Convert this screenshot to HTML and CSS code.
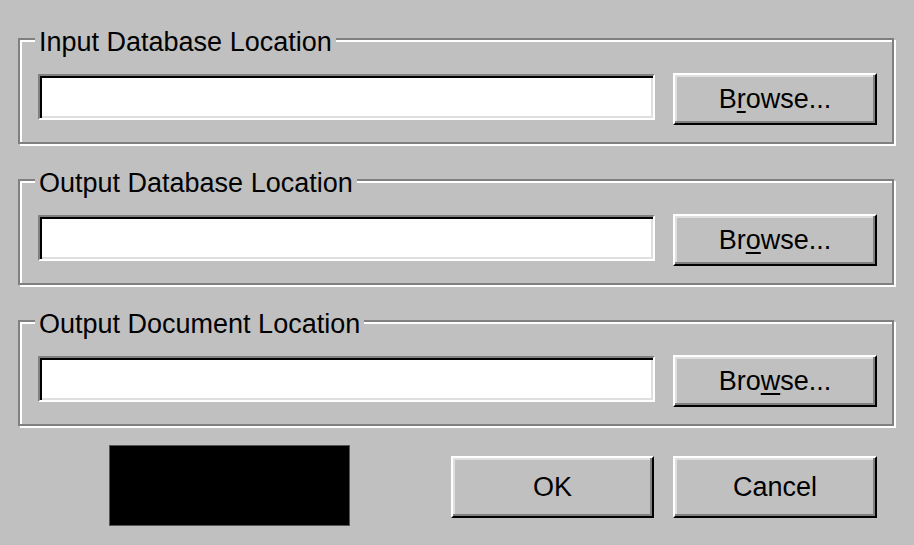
FILE: index.html
```html
<!DOCTYPE html>
<html>
<head>
<meta charset="utf-8">
<link rel="stylesheet" href="styles.css">
</head>
<body>
<div class="dialog">
  <div class="group">
    <div class="group-title">Input Database Location</div>
    <div class="row">
      <input class="field" type="text">
      <button class="btn browse">B<u>r</u>owse...</button>
    </div>
  </div>
  <div class="group">
    <div class="group-title">Output Database Location</div>
    <div class="row">
      <input class="field" type="text">
      <button class="btn browse">Br<u>o</u>wse...</button>
    </div>
  </div>
  <div class="group">
    <div class="group-title">Output Document Location</div>
    <div class="row">
      <input class="field" type="text">
      <button class="btn browse">Bro<u>w</u>se...</button>
    </div>
  </div>
  <div class="actions">
    <div class="preview"></div>
    <button class="btn action ok">OK</button>
    <button class="btn action">Cancel</button>
  </div>
</div>
</body>
</html>
```
FILE: styles.css
```css
html, body {
  margin: 0;
  background: #c0c0c0;
}
body {
  font-family: "Liberation Sans", Arial, sans-serif;
  color: #000;
}
.dialog {
  padding: 38px 0 0 18px;
  width: 876px;
}
.group {
  border: 2px solid #808080;
  box-shadow: inset 2px 2px 0 #fff, 2px 2px 0 #fff;
  padding: 0 15px 17px 18px;
}
.group + .group {
  margin-top: 35px;
}
.group-title {
  width: fit-content;
  margin: -12px 0 0 -3px;
  padding: 0 4px;
  background: #c0c0c0;
  font-size: 27px;
  line-height: 28px;
}
.row {
  display: flex;
  align-items: flex-start;
  gap: 18px;
  margin-top: 17px;
}
.field {
  box-sizing: border-box;
  width: 617px;
  height: 46px;
  margin: 1px 0 0 0;
  padding: 0 6px;
  border: 2px solid;
  border-color: #808080 #fff #fff #808080;
  box-shadow: inset 2px 2px 0 #000, inset -2px -2px 0 #dfdfdf;
  background: #fff;
  font: inherit;
  font-size: 24px;
  outline: none;
}
.btn {
  box-sizing: border-box;
  width: 204px;
  height: 52px;
  margin: 0;
  padding: 0;
  border: 2px solid;
  border-color: #fff #000 #000 #fff;
  box-shadow: inset -2px -2px 0 #808080, inset 2px 2px 0 #dfdfdf;
  background: #c0c0c0;
  font-family: "Liberation Sans", Arial, sans-serif;
  font-size: 27px;
  color: #000;
}
.btn u {
  text-underline-offset: 3px;
}
.actions {
  display: flex;
  align-items: flex-start;
  margin-top: 19px;
  padding-left: 91px;
}
.preview {
  box-sizing: border-box;
  width: 241px;
  height: 81px;
  background: #000;
  border: 1px solid #555;
}
.action {
  height: 62px;
  margin-top: 11px;
}
.ok {
  width: 203px;
  margin-left: 101px;
  margin-right: 19px;
}
```
